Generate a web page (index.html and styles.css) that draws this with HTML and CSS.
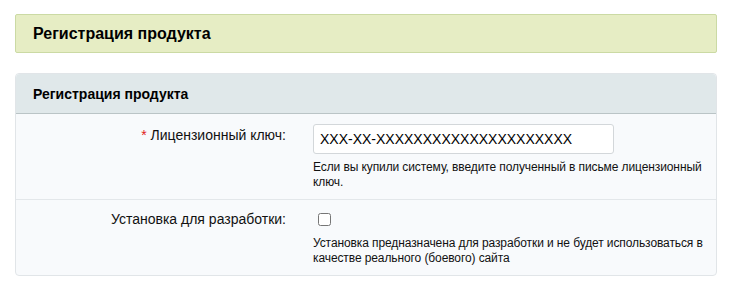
FILE: index.html
```html
<!DOCTYPE html>
<html>

<head>
  <link rel="stylesheet" href="styles.css">
</head>

<body>
  <div class="page-title">
    <h1>Регистрация продукта</h1>
  </div>

  <div class="panel">
    <div class="panel-head">Регистрация продукта</div>

    <div class="row">
      <label class="row-label" for="key"><span class="req">*</span> Лицензионный ключ:</label>
      <div class="row-value">
        <input type="text" id="key" class="text-input" value="XXX-XX-XXXXXXXXXXXXXXXXXXXXX">
        <div class="hint">Если вы купили систему, введите полученный в письме лицензионный ключ.</div>
      </div>
    </div>

    <div class="row row-last">
      <label class="row-label" for="dev">Установка для разработки:</label>
      <div class="row-value">
        <input type="checkbox" id="dev" class="check">
        <div class="hint">Установка предназначена для разработки и не будет использоваться в качестве реального (боевого) сайта</div>
      </div>
    </div>
  </div>
</body>

</html>
```

FILE: styles.css
```css
body {
  margin: 0;
  padding: 14px 16px 0 15px;
  background: #fff;
  color: #000;
  font-family: 'Liberation Sans', Arial, sans-serif;
  font-size: 14px;
}

.page-title {
  height: 37px;
  display: flex;
  align-items: center;
  padding: 0 17px;
  background: #e6edc4;
  border: 1px solid #cbdaa4;
  border-radius: 2px;
}

.page-title h1 {
  margin: 0;
  font-size: 16px;
  font-weight: bold;
}

.panel {
  margin-top: 20px;
  background: #f8fafc;
  border: 1px solid #e1e5e8;
  border-radius: 4px;
}

.panel-head {
  height: 39px;
  display: flex;
  align-items: center;
  padding: 0 17px;
  background: #e0e8ea;
  border-bottom: 1px solid #bac4c6;
  border-radius: 4px 4px 0 0;
  font-weight: bold;
}

.row {
  display: grid;
  grid-template-columns: 270px 1fr;
  column-gap: 27px;
  padding: 10px 1px 9px 0;
  border-bottom: 1px solid #e3e7ea;
}

.row-last {
  border-bottom: none;
  padding-top: 8px;
  padding-bottom: 9px;
}

.row-label {
  text-align: right;
  padding-top: 3px;
  line-height: 16px;
  color: #111;
}

.req {
  color: #e02020;
}

.text-input {
  display: block;
  width: 301px;
  height: 30px;
  box-sizing: border-box;
  margin: 0;
  padding: 0 6px;
  border: 1px solid #d3d7da;
  border-radius: 3px;
  background: #fff;
  font-family: 'Liberation Sans', Arial, sans-serif;
  font-size: 14px;
  color: #000;
}

.check {
  display: block;
  width: 13px;
  height: 13px;
  margin: 5px 0 0 5px;
}

.hint {
  margin-top: 6px;
  font-size: 12px;
  line-height: 15px;
  letter-spacing: -0.1px;
  color: #111;
}

.row-last .hint {
  margin-top: 10px;
}
```
